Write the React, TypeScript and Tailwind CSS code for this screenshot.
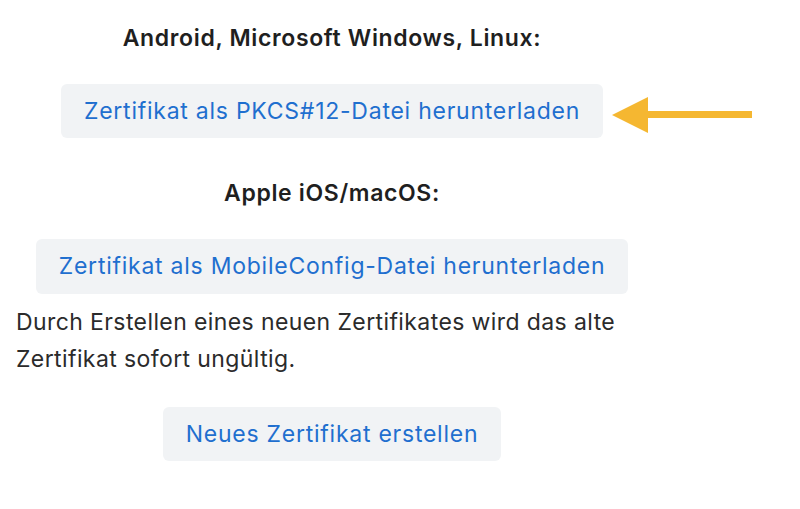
export default function App() {
  return (
    <div className="relative w-[800px] h-[509px] bg-white overflow-hidden font-['Inter','Liberation_Sans',sans-serif]">
      <div className="w-[664px] px-4 flex flex-col items-center">
        <h3 className="mt-[25px] h-[26px] leading-[26px] text-[23px] tracking-[0.65px] font-semibold text-[#1f1f1f]">
          Android, Microsoft Windows, Linux:
        </h3>
        <button className="mt-[33px] h-[54px] px-[23px] rounded-md bg-[#f1f3f5] text-[23px] tracking-[0.75px] text-[#1f6fcf]">
          Zertifikat als PKCS#12-Datei herunterladen
        </button>
        <h3 className="mt-[42px] h-[26px] leading-[26px] text-[23px] tracking-[0.65px] font-semibold text-[#1f1f1f]">
          Apple iOS/macOS:
        </h3>
        <button className="mt-[33px] h-[55px] px-[23px] rounded-md bg-[#f1f3f5] text-[23px] tracking-[0.75px] text-[#1f6fcf]">
          Zertifikat als MobileConfig-Datei herunterladen
        </button>
        <p className="mt-[10px] self-stretch text-left text-[23px] tracking-[0.4px] leading-[37px] text-[#2b2b2b]">
          Durch Erstellen eines neuen Zertifikates wird das alte Zertifikat sofort ungültig.
        </p>
        <button className="mt-[29px] h-[54px] px-[23px] rounded-md bg-[#f1f3f5] text-[23px] tracking-[0.75px] text-[#1f6fcf]">
          Neues Zertifikat erstellen
        </button>
      </div>
      <svg className="absolute left-[610px] top-[94px]" width="146" height="42" viewBox="0 0 146 42">
        <path d="M2 21 L38 3 L38 39 Z" fill="#f5b731" />
        <rect x="34" y="17" width="108" height="7" fill="#f5b731" />
      </svg>
    </div>
  );
}
